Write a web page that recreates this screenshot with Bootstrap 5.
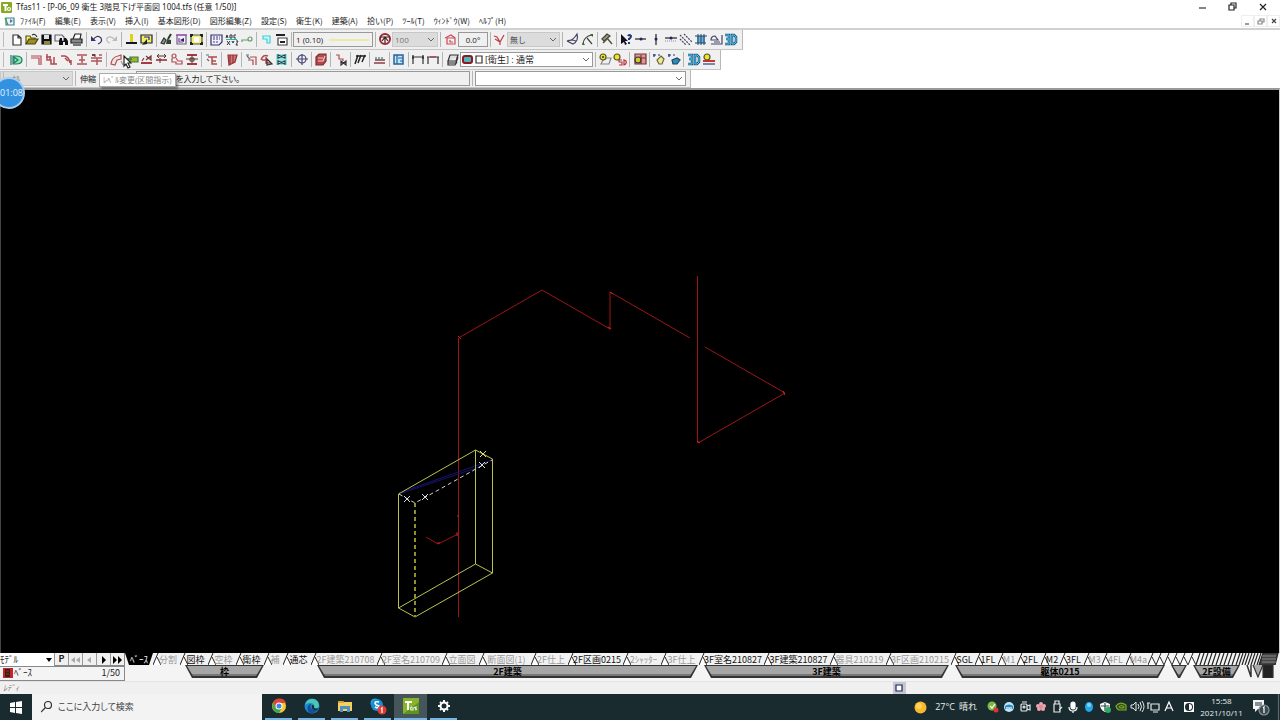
<!DOCTYPE html>
<html lang="ja">
<head>
<meta charset="utf-8">
<meta name="viewport" content="width=device-width, initial-scale=1">
<title>Tfas11</title>
<link rel="stylesheet" href="https://cdn.jsdelivr.net/npm/bootstrap@5.3.0/dist/css/bootstrap.min.css">
<style>
body{font-family:"Open Sans","Noto Sans CJK JP",sans-serif;font-size:9px;line-height:12px;color:#222;background:#fff}
button,input,select{font:inherit;color:inherit;border:0;background:none;padding:0;margin:0;border-radius:0;min-width:0}
svg{display:block;flex:none;fill:none;stroke-width:1.2}
.titlebar{height:14px;font:8px/14px "Noto Sans","Noto Sans CJK JP",sans-serif;font-feature-settings:"palt";padding-left:1px}
.winbtn{width:30px;height:14px}
.menubar{height:16px;border-bottom:2px solid #d0d0d0;font-family:"Noto Sans CJK JP",sans-serif;font-size:8px;color:#222}
.menubar .items{gap:9px;padding-left:4px}
.mdi button{width:13px;height:12px;border:1px solid #eee}
.dock{height:58px}
.tools{height:20px;background:#f0f0f0;border-bottom:1px solid #c4c4c4;border-right:1px solid #b8b8b8;padding-left:9px;position:relative;font-size:8px}
.tools.low{height:18px}
.tools::before{content:"";position:absolute;left:3px;top:2px;bottom:2px;width:1px;background:#bbb}
.tools button{width:15px;height:15px}
.sep,.sep4{width:5px;height:15px;flex:none;background:linear-gradient(90deg,transparent 2px,#b4b4b4 2px,#b4b4b4 3px,transparent 3px)}
.sep4{width:4px}
.combo{appearance:none;height:15px;border:1px solid #999;padding:0 4px;line-height:12px;background:#fff url("data:image/svg+xml,%3Csvg xmlns='http://www.w3.org/2000/svg' width='10' height='6'%3E%3Cpath d='M2 1l3 3 3-3' fill='none' stroke='%23666'/%3E%3C/svg%3E") no-repeat right 1px center}
.gray{background-color:#dcdcdc;border-color:#c8c8c8;color:#777;padding-left:2px}
.field{height:15px;border:1px solid #999;background:#f0f0f0}
.tools .penbox{width:80px;padding-left:2px}
.w-scale{width:46px}.w-ang{width:30px}.w-none{width:53px;color:#444}.w-layer{width:133px;padding-left:24px;font-size:9px}.w-mode{width:73px;padding-left:11px;opacity:1}
.msglabel{padding:0 40px 0 2px}
.message{width:334px;padding-left:31px}
.palt{font-family:"Noto Sans CJK JP",sans-serif;font-feature-settings:"palt"}
.w-entry{width:211px}
.stage{background:#000;border-top:2px solid #999;border-left:1px solid #444;border-right:1px solid #ccc;min-height:0}
.tip{left:99px;top:73px;height:14px;padding:0 3px;background:#fff;border:1px solid #aaa;box-shadow:2px 2px 2px #0006;color:#888;white-space:nowrap;line-height:12px;font-size:8px;z-index:3}
.timer{left:-7px;top:77px;width:32px;height:32px;border-radius:50%;background:#3391e2;border:2px solid #a9cdea;color:#e8f4ff;z-index:4;font:9px/28px "Open Sans",sans-serif;text-align:center;padding-left:5px}
.cursor{left:123px;top:55px;z-index:5}
.sheets{background:#f4f4f4;height:28px;font-family:"Noto Sans CJK JP",sans-serif}
.ctrl{width:125px;border-right:1px solid #888;border-bottom:1px solid #888;background:#f4f4f4}
.ctrl .top{height:14px;border-bottom:1px solid #888}
.ctrl .top button{width:14px;height:13px;border-left:1px solid #999;border-bottom:1px solid #888;background:#f0f0f0;font-weight:700}
.w-model{width:54px;height:13px;border:0;padding:0;background-image:url("data:image/svg+xml,%3Csvg xmlns='http://www.w3.org/2000/svg' width='8' height='6'%3E%3Cpath d='M1 1h6l-3 4z'/%3E%3C/svg%3E")}
.tabs{display:grid;height:12px;grid-template-columns:28px 27px 28px 28px 28px 19px 28px 66px 65px 37px 52px 37px 55px 38px 38px 65px 66px 56px 65px 24px 23px 19px 24px 19px 24px 18px 24px 22px repeat(6,8px) 1fr}
.sheet{overflow:hidden;white-space:nowrap;line-height:11px;height:12px;color:#111;padding-left:3px;text-align:center;background:#f2f2f2 url("data:image/svg+xml,%3Csvg xmlns='http://www.w3.org/2000/svg' width='8' height='12'%3E%3Cpath d='M4 1L0 12h8z' fill='%23fff'/%3E%3Cpath d='M5 0L0 12M4 4l4 8' fill='none' stroke='%23222'/%3E%3C/svg%3E") no-repeat}
.sheet.off{color:#999}
.sheet.on{background:#000;color:#fff;padding:0;clip-path:polygon(0 0,100% 0,calc(100% - 4px) 100%,4px 100%)}
.groups{display:grid;height:14px;grid-template-columns:79px 381px 245px 210px 16px 47px 1fr;column-gap:6px;padding-left:60px}
.grp{position:relative;height:13px;background:#333;clip-path:polygon(0 0,100% 0,calc(100% - 7px) 100%,7px 100%);font-weight:700;color:#000;z-index:0;line-height:12px;white-space:nowrap}
.grp::before{content:"";position:absolute;z-index:-1;inset:1px 2px 2px 2px;background:linear-gradient(#a6a6a6 8px,#777 8px);clip-path:polygon(0 0,100% 0,calc(100% - 6px) 100%,6px 100%)}
.shifted{margin-left:47px;margin-right:-47px}
.status{height:13px;background:#f0f0f0;color:#777;padding-left:3px;border-top:1px solid #e4e4e4;font:8px/12px "Noto Sans CJK JP",sans-serif}
.status svg{margin-right:374px}
.taskbar{height:26px;background:#1a2b2f;color:#e8eeee}
.start{width:32px;height:26px}
.search{width:230px;height:26px;background:#f3f3f3;color:#444;padding:0 9px;gap:6px}
.search input{font-size:9px;width:150px;outline:0}
.search input::placeholder{color:#444;opacity:1}
.app{width:33px;height:26px;padding:0 3px}
.app span{height:24px}
.app::after{content:"";display:block;height:2px;background:#76b5e6}
.app.active{background:#45555a;padding:0}
.tray button{width:16px;height:26px}
.clock{font-size:8px;line-height:12px;width:55px;text-align:center;padding-right:6px}
</style>
</head>
<body>
<div class="vh-100 d-flex flex-column overflow-hidden position-relative">

<header class="titlebar d-flex align-items-center">
  <svg width="11" height="11"><rect width="11" height="11" rx="1" fill="#8aa823"/><path d="M2 3h5M4.500 3v6" stroke="#fff" stroke-width="2"/><circle cx="8" cy="7" r="1.500" stroke="#fff"/></svg>
  <span class="ms-1">Tfas11 - [P-06_09 衛生 3階見下げ平面図 1004.tfs (任意 1/50)]</span>
  <div class="ms-auto d-flex">
    <button class="winbtn" aria-label="最小化"><svg width="30" height="14"><path d="M9 8h7" stroke="#333"/></svg></button>
    <button class="winbtn" aria-label="元に戻す"><svg width="30" height="14"><path d="M9 5h5v5H9zM11 5V3h5v5h-2" stroke="#222"/></svg></button>
    <button class="winbtn" aria-label="閉じる"><svg width="30" height="14"><path d="M10 4l6 6M16 4l-6 6" stroke="#222"/></svg></button>
  </div>
</header>

<nav class="menubar d-flex align-items-center">
  <svg width="12" height="11" class="ms-1"><path d="M2 2h8v7H2z" fill="#eef" stroke="#388"/><path d="M1 2l3 7" stroke="#494"/><path d="M6 3l3 2-3 2z" fill="#57a"/></svg>
  <div class="items d-flex">
    <button>ﾌｧｲﾙ(F)</button><button>編集(E)</button><button>表示(V)</button><button>挿入(I)</button><button>基本図形(D)</button><button>図形編集(Z)</button><button>設定(S)</button><button>衛生(K)</button><button>建築(A)</button><button>拾い(P)</button><button>ﾂｰﾙ(T)</button><button>ｳｨﾝﾄﾞｳ(W)</button><button>ﾍﾙﾌﾟ(H)</button>
  </div>
  <div class="mdi d-flex ms-auto">
    <button aria-label="最小化"><svg width="11" height="10"><path d="M3 8h4" stroke="#555"/></svg></button>
    <button aria-label="元に戻す"><svg width="11" height="10"><path d="M3 5h4v3H3zM5 5V3h4v3H7" stroke="#888"/></svg></button>
    <button aria-label="閉じる"><svg width="11" height="10"><path d="M4 3l4 4M8 3L4 7" stroke="#444"/></svg></button>
  </div>
</nav>

<main class="dock d-flex flex-column align-items-start">
<div class="tools d-flex align-items-center">
  <button aria-label="新規"><svg width="15" height="15"><path d="M4 3h5l3 3v7H4zM9 3v3h3" stroke="#333" fill="#fff"/></svg></button>
  <button aria-label="開く"><svg width="15" height="15"><path d="M2 12V4h4l1 2h4v2" fill="#f7ed60" stroke="#552"/><path d="M2 12l3-5h9l-3 5z" fill="#a08c20" stroke="#441"/><path d="M8 3q3-2 5 2" stroke="#333"/></svg></button>
  <button aria-label="保存"><svg width="15" height="15"><path d="M3 3h9v9H3z" fill="#111" stroke="#111"/><path d="M5 3h5v4H5z" fill="#dde"/><path d="M5 9h6v3H5z" fill="#8a8c33"/></svg></button>
  <button aria-label="検索"><svg width="15" height="15"><path d="M1 3h7l2 2v4H1z" fill="#eee" stroke="#667"/><path d="M5 13V9l1-3h2v3h2V6h2l2 3v4h-3v-3H9v3z" fill="#111"/></svg></button>
  <button aria-label="印刷"><svg width="15" height="15"><path d="M4 7l2-5h6l-1 5" fill="#fff" stroke="#222"/><path d="M2 7h11v4H2z" fill="#888" stroke="#222"/><path d="M4 13h8" stroke="#222"/></svg></button>
  <i class="sep"></i>
  <button aria-label="元に戻す"><svg width="15" height="15"><path d="M4 8q4-6 8-2 2 4-3 6" stroke="#336"/><path d="M2 4v5h5z" fill="#336"/></svg></button>
  <button aria-label="やり直し"><svg width="15" height="15"><path d="M11 8Q7 3 3 6q-1 4 3 5" stroke="#bbb"/><path d="M13 4v5H8z" fill="#bbb"/></svg></button>
  <i class="sep"></i>
  <button aria-label="レイヤ"><svg width="15" height="15"><path d="M2 10h11v2H2z" fill="#113"/><path d="M6 2h3v8H6z" fill="#ddd41a"/></svg></button>
  <button aria-label="属性"><svg width="15" height="15"><path d="M2 3h11v8H2z" stroke="#223" fill="#f3ed60"/><path d="M5 5h5v3" stroke="#22a"/><path d="M3 13l5-6v5z" fill="#123"/></svg></button>
  <i class="sep"></i>
  <button aria-label="筆"><svg width="15" height="15"><path d="M12 2L9 7" stroke="#333" stroke-width="2"/><path d="M8 7l4 1v4H7z" fill="#343"/><path d="M2 11l3-5 2 2-2 4z" fill="#899" stroke="#333"/></svg></button>
  <button aria-label="範囲"><svg width="15" height="15"><path d="M3 3h9v9H3z" stroke="#667"/><path d="M2 3h11M5 6v4h4" stroke="#93b"/><path d="M10 6L6 8l4 2z" fill="#226"/></svg></button>
  <button aria-label="全体"><svg width="15" height="15"><path d="M2 3h11v9H2z" fill="#f5ef79" stroke="#555"/><path d="M5 5h5v5H5z" fill="#fff"/><path d="M2 5V3h2m7 0h2v2m0 5v2h-2M4 12H2v-2" stroke="#222" stroke-width="2"/></svg></button>
  <i class="sep"></i>
  <button aria-label="文字"><svg width="15" height="15"><path d="M2 3h11v7l-3 3H2z" fill="#eef" stroke="#336"/><path d="M4 5h7M4 7h7M4 10h5" stroke="#447" stroke-dasharray="2 1"/></svg></button>
  <button aria-label="文字変更"><svg width="15" height="15"><path d="M2 6l1-3 1 3m2-3h2v3H6zm6 0h-2v3h2M3 9l3 4m0-4l-3 4m5-4l1 2 1-2m2 0h2l-2 4h2" stroke="#334" stroke-width="1"/><path d="M2 7.500h11" stroke="#2b9" stroke-width="1"/></svg></button>
  <button aria-label="鍵"><svg width="15" height="15"><circle cx="11" cy="7" r="2" stroke="#699b70"/><path d="M9 8H3v2" stroke="#699b70"/></svg></button>
  <i class="sep"></i>
  <button aria-label="形状"><svg width="15" height="15"><path d="M4 4h7v7H8V7H4z" fill="#cff" stroke="#42cbd0"/></svg></button>
  <button aria-label="一覧"><svg width="15" height="15"><path d="M4 6h9v7H4z" stroke="#444" fill="#fff"/><path d="M2 3h9" stroke="#222" stroke-width="2"/><path d="M6 10h5" stroke="#222" stroke-width="2"/></svg></button>
  <i class="sep4"></i>
  <button class="field penbox d-flex align-items-center" aria-label="線種">1 (0.10) <svg class="ms-1" width="42" height="8"><path d="M2 4h40" stroke="#e6e65a"/></svg></button>
  <i class="sep4"></i>
  <button aria-label="縮尺"><svg width="15" height="15"><circle cx="8" cy="7" r="5" stroke="#a12a32" stroke-width="2"/><path d="M3 5h10M5 9l3-4 3 4M8 5v6" stroke="#422"/></svg></button>
  <select class="combo gray w-scale" disabled aria-label="縮尺値"><option>100</option></select>
  <i class="sep"></i>
  <button aria-label="角度"><svg width="15" height="15"><path d="M4 6h8v6H4z" stroke="#cc4a55"/><path d="M2 6l6-3 4 3M7 8v2h3" stroke="#cc4a55"/></svg></button>
  <input class="field w-ang text-center" value="0.0°" aria-label="角度値">
  <i class="sep4"></i>
  <button aria-label="スナップ"><svg width="15" height="15"><path d="M2 4l3 1 3 5 4-7M3 7l5 3v3" stroke="#bd3b44"/></svg></button>
  <select class="combo gray w-none" aria-label="種別"><option>無し</option></select>
  <i class="sep"></i>
  <button aria-label="曲面"><svg width="15" height="15"><path d="M12 2q2 7-4 10L2 9q6 0 10-7zM2 9q4-2 9 0" stroke="#446"/></svg></button>
  <button aria-label="接線"><svg width="15" height="15"><path d="M3 12Q4 4 12 3M7 6l5 6" stroke="#444"/><path d="M2 13h3l-2-3zM10 2h3v3z" fill="#363"/></svg></button>
  <i class="sep4"></i>
  <button aria-label="ハンマー"><svg width="15" height="15"><path d="M3 7l5-5 3 2-6 5z" fill="#998" stroke="#443"/><path d="M8 6l5 6M4 11l4-4" stroke="#554" stroke-width="1.500"/></svg></button>
  <i class="sep4"></i>
  <button aria-label="ヘルプ"><svg width="15" height="15"><path d="M3 2v10l3-2 1 3 2-1-2-3h3z" fill="#112"/><path d="M10 4q1-2 3 0 0 2-2 3v1m0 2v2" stroke="#237" stroke-width="2"/></svg></button>
  <button aria-label="水平"><svg width="15" height="15"><path d="M2 7h11" stroke="#222"/><circle cx="8" cy="7" r="1.500" fill="#226"/></svg></button>
  <button aria-label="垂直"><svg width="15" height="15"><path d="M8 2v11" stroke="#222"/><circle cx="8" cy="7" r="1.500" fill="#226"/></svg></button>
  <button aria-label="中間"><svg width="15" height="15"><path d="M2 6h12" stroke="#222"/><circle cx="8" cy="6" r="1.500" fill="#226"/><path d="M2 9h12" stroke="#88a" stroke-dasharray="1 1"/></svg></button>
  <button aria-label="平行"><svg width="15" height="15"><path d="M2 3l10 10M6 2l8 8M2 7l6 6" stroke="#446" stroke-dasharray="2 1"/></svg></button>
  <button aria-label="格子"><svg width="15" height="15"><path d="M4 4h8v7H4z" fill="#6bb0d8"/><path d="M5 2v11M8 2v11M11 2v11M2 4h12M2 11h11" stroke="#246" stroke-width="1"/></svg></button>
  <button aria-label="図形"><svg width="15" height="15"><path d="M3 12h11V3M3 8q0-4 4-4l3 4zM6 10h6" stroke="#446"/></svg></button>
  <button class="me-1" aria-label="3D"><svg width="15" height="15"><path d="M2 3h4v9H2M3 7h3M9 3h2l2 2v5l-2 2H9z" stroke="#165a86" stroke-width="2.500"/><path d="M2 3h4v9H2M3 7h3M9 3h2l2 2v5l-2 2H9z" stroke="#5bc4e8" stroke-width="1"/></svg></button>
</div>

<div class="tools d-flex align-items-center">
  <button aria-label="配管"><svg width="15" height="15"><path d="M4 4h3q6 0 6 4t-6 4H4z" fill="#8ee9b0" stroke="#276"/><path d="M2 3v10M5 5l4 3-4 3z" stroke="#276"/></svg></button>
  <i class="sep"></i>
  <button aria-label="エルボ"><svg width="15" height="15"><path d="M2 4h10v9M2 6h8v7" stroke="#b14a50"/></svg></button>
  <button aria-label="分岐"><svg width="15" height="15"><path d="M3 2v6h4v4h6M6 4v4m4-3v7M2 5h5" stroke="#b14a50" stroke-width="1.500"/></svg></button>
  <button aria-label="曲げ"><svg width="15" height="15"><path d="M2 4h4q4 1 5 7m1-3v5M6 6l3 3" stroke="#b14a50" stroke-width="1.500"/></svg></button>
  <button aria-label="上下"><svg width="15" height="15"><path d="M3 3h10M3 12h10M5 8h6M8 4v7" stroke="#b1545a" stroke-width="1.500"/></svg></button>
  <button aria-label="間隔"><svg width="15" height="15"><path d="M2 6h11M2 9h11M3 3h3v2m4-2h3M8 6v7" stroke="#b1545a" stroke-width="1.500"/><path d="M3 3h3" stroke="#222"/></svg></button>
  <i class="sep"></i>
  <button aria-label="レベル変更"><svg width="15" height="15"><path d="M2 12q1-7 7-8l3-1v4L8 8l-2 5z" fill="#f6e4e4" stroke="#a55"/><path d="M12 9l2 4" stroke="#999"/></svg></button>
  <button aria-label="区間"><svg width="15" height="15"><path d="M6 5h8v5H6z" fill="#9ab91c" stroke="#475"/><path d="M2 7h6" stroke="#484" stroke-width="2"/></svg></button>
  <button aria-label="接続"><svg width="15" height="15"><path d="M2 11h11" stroke="#a63c42" stroke-width="2"/><path d="M7 4l5 4V4L7 8M5 6L3 9" stroke="#733"/></svg></button>
  <button aria-label="切断"><svg width="15" height="15"><path d="M2 8h11" stroke="#b1545a" stroke-width="2"/><path d="M3 4h9M5 2L3 4l2 2m5-4l2 2-2 2M6 6v5" stroke="#533" stroke-width="1"/></svg></button>
  <button aria-label="移動"><svg width="15" height="15"><circle cx="5" cy="4" r="2" stroke="#b14a50"/><path d="M3 6v4h4v2h6v-3H9L7 6" stroke="#b14a50"/></svg></button>
  <button aria-label="伸縮"><svg width="15" height="15"><path d="M3 3h10M3 12h10" stroke="#a63c42" stroke-width="2"/><path d="M2 7h12M8 3v8M6 6h4v3H6z" stroke="#533" stroke-width="1"/></svg></button>
  <i class="sep"></i>
  <button aria-label="変換"><svg width="15" height="15"><path d="M4 5h9M8 5v7h5M8 9h4" stroke="#b14a50" stroke-width="1.500"/><path d="M2 3h3M3 7l2 2" stroke="#477"/></svg></button>
  <i class="sep"></i>
  <button aria-label="断面"><svg width="15" height="15"><path d="M4 3h9l-2 7-6 3z" fill="#c9797c" stroke="#933"/><path d="M6 3v9M9 3v8" stroke="#933"/></svg></button>
  <i class="sep"></i>
  <button aria-label="配管変更"><svg width="15" height="15"><path d="M6 5h6v8M4 8h5v5" stroke="#b14a50"/><path d="M2 3h3M3 4l3 3" stroke="#477"/></svg></button>
  <button aria-label="回転"><svg width="15" height="15"><path d="M2 8q2-6 7-4M3 8h5M7 5v6h5" stroke="#b14a50" stroke-width="1.500"/><path d="M8 7v6l5-1z" stroke="#333"/></svg></button>
  <button aria-label="バルブ"><svg width="15" height="15"><path d="M2 2h11v11H2z" fill="#91e3e5"/><path d="M4 3v3l7-3v3zM4 9v3l7-3v3z" stroke="#244" fill="#fff"/></svg></button>
  <i class="sep"></i>
  <button aria-label="中心"><svg width="15" height="15"><circle cx="8" cy="7" r="4" stroke="#447"/><path d="M8 2v11M2 7h12" stroke="#447"/></svg></button>
  <i class="sep4"></i>
  <button aria-label="立体"><svg width="15" height="15"><path d="M3 5l3-3h7v7l-3 4H3z" fill="#b8454b" stroke="#733"/><path d="M5 6h5M5 9h5l2-5" stroke="#ecc"/></svg></button>
  <i class="sep"></i>
  <button aria-label="弁"><svg width="15" height="15"><path d="M3 3h3v4h4v2" stroke="#b14a50"/><path d="M8 9v4l5-4v4z" stroke="#333"/></svg></button>
  <i class="sep4"></i>
  <button aria-label="斜線"><svg width="15" height="15"><path d="M4 4h10M6 3L3 12M9 3L6 11m7-8l-3 7" stroke="#222" stroke-width="1.500"/></svg></button>
  <i class="sep"></i>
  <button aria-label="床"><svg width="15" height="15"><path d="M2 11h11M3 8h10" stroke="#8c4045" stroke-width="1.500"/><path d="M4 5v3m3-3v3m3-3v3" stroke="#477"/></svg></button>
  <i class="sep4"></i>
  <button aria-label="表"><svg width="15" height="15"><path d="M3 3h9v9H3z" fill="#bfe5fa" stroke="#27639c" stroke-width="1.500"/><path d="M6 3v9M7 6h5M9 9h3" stroke="#27639c"/></svg></button>
  <i class="sep4"></i>
  <button aria-label="寸法"><svg width="15" height="15"><path d="M2 5h12M3 5v7M13 5v7" stroke="#333"/><path d="M3 3v4m10-4v4" stroke="#222"/></svg></button>
  <button aria-label="寸法2"><svg width="15" height="15"><path d="M2 5h12M3 5v7M13 5v7" stroke="#333"/><path d="M5 5h6" stroke="#b34"/></svg></button>
  <i class="sep"></i>
  <button aria-label="レイヤ"><svg width="15" height="15"><path d="M5 3h8l-2 6H3zM3 9v2h8l2-6M3 11v2h7l2-3" fill="#ddd" stroke="#333"/></svg></button>
  <span class="position-relative d-flex">
    <select class="combo w-layer" aria-label="レイヤグループ"><option>[衛生] : 通常</option></select>
    <svg class="position-absolute start-0 top-0" width="24" height="15"><rect x="3" y="4" width="9" height="7" rx="2" fill="#4bb7bc" stroke="#8d1820" stroke-width="2"/><path d="M16 4h6v7h-6z" stroke="#333"/></svg>
  </span>
  <i class="sep4"></i>
  <button aria-label="確認"><svg width="15" height="15"><path d="M4 12l3-6h7l-2 6z" stroke="#888"/><circle cx="6" cy="5" r="3" fill="#f0e423" stroke="#553"/><circle cx="6" cy="5" r="1" fill="#333"/></svg></button>
  <button aria-label="確認SD"><svg width="15" height="15"><circle cx="5" cy="5" r="3" fill="#f0e423" stroke="#553"/><path d="M10 8H7v2h3v3H7m5-5v5q3-1 2-4z" stroke="#bb343d"/></svg></button>
  <i class="sep"></i>
  <button aria-label="照合"><svg width="15" height="15"><path d="M3 2h11v10H3z" fill="#d99" stroke="#733"/><circle cx="6" cy="8" r="3" fill="#c8cf35" stroke="#333"/><path d="M9 3v9M9 6h5" stroke="#733"/></svg></button>
  <i class="sep4"></i>
  <button aria-label="表示"><svg width="15" height="15"><path d="M2 3h3m2 0h2M3 2v3" stroke="#238"/><path d="M10 4l3 3-2 5H8L6 8z" fill="#f0eb86" stroke="#664"/></svg></button>
  <button aria-label="着色"><svg width="15" height="15"><path d="M2 3h3m2 0h2M3 2v3" stroke="#238"/><path d="M6 8l5-2 3 2-3 4H7z" fill="#2791bb" stroke="#246"/></svg></button>
  <i class="sep"></i>
  <button aria-label="3D表示"><svg width="15" height="15"><path d="M2 3h4v9H2M3 7h3M9 3h2l2 2v5l-2 2H9z" stroke="#165a86" stroke-width="2.500"/><path d="M2 3h4v9H2M3 7h3M9 3h2l2 2v5l-2 2H9z" stroke="#5bc4e8" stroke-width="1"/></svg></button>
  <button class="me-1" aria-label="集計"><svg width="15" height="15"><path d="M2 9h12" stroke="#c33" stroke-width="2"/><path d="M2 12h12" stroke="#78a" stroke-width="2"/><circle cx="6" cy="5" r="3" fill="#f0e423" stroke="#553"/></svg></button>
</div>

<div class="tools low d-flex align-items-center ps-0">
  <select class="combo gray w-mode" disabled aria-label="モード"><option>ﾅﾙ</option></select>
  <i class="sep"></i>
  <label for="msg" class="msglabel">伸縮</label>
  <input id="msg" class="field message palt" value="点を入力して下さい。" readonly>
  <i class="sep"></i>
  <select class="combo w-entry me-1" aria-label="入力値"><option></option></select>
</div>
</main>

<section class="stage flex-grow-1">
  <svg class="w-100 h-100" viewBox="1 90 1278 563" preserveAspectRatio="xMidYMid meet" role="img" aria-label="配管アイソメ図">
    <g stroke="#9e1515" stroke-width="1">
      <path d="M458.500 617V338L542 290l68 39v-37l80 46M705 347l80 46-87 50M697.500 276v167M426 537l12 7 20-10"/>
      <path d="M458 336l3 3M608 327l3 2M610 292l3 2M697 441l3 2M783 391l2 4M437 543h3M457 516h2M457 532v4" stroke="#cf2525"/>
    </g>
    <g stroke="#15156e" stroke-width="1"><path d="M399 493L492 460M402 493L482 466"/></g>
    <g stroke="#bcc24e" stroke-width="1">
      <path d="M398.500 494L475.500 450l17 9v114L415 617l-16.500-9zM475.500 450v114l17 9M475.500 564L398.500 608"/>
      <path d="M415 503v114" stroke="#8f922c" stroke-width="2" stroke-dasharray="4 3"/>
    </g>
    <path d="M399 494l16 9 77-43" stroke="#d0d0df" stroke-width="1" stroke-dasharray="4 3"/>
    <path d="M404 496l6 6m0-6l-6 6M422 494l6 6m0-6l-6 6M479 462l6 6m0-6l-6 6" stroke="#ddd" stroke-width="1"/>
    <path d="M480 451l6 6m0-6l-6 6" stroke="#e0e07a" stroke-width="1"/>
  </svg>
</section>

<section class="sheets d-flex">
  <div class="ctrl flex-shrink-0">
    <div class="top d-flex">
      <select class="combo w-model" aria-label="モデル"><option>ﾓﾃﾞﾙ</option></select>
      <button>P</button>
      <button aria-label="先頭"><svg width="13" height="11"><path d="M6 3v6L2 6zM11 3v6L7 6z" fill="#aaa"/></svg></button>
      <button aria-label="前へ"><svg width="13" height="11"><path d="M8 3v6L4 6z" fill="#aaa"/></svg></button>
      <button aria-label="次へ"><svg width="13" height="11"><path d="M5 2v8l4-4z" fill="#000"/></svg></button>
      <button aria-label="最後"><svg width="13" height="11"><path d="M2 2v8l4-4zM7 2v8l4-4z" fill="#000"/></svg></button>
    </div>
    <div class="d-flex align-items-center">
      <svg width="14" height="12"><path d="M3 1h10v10H3z" fill="#c42530"/><path d="M5 2h5v8H5z" fill="#321"/><path d="M6 4h3M6 7h3" stroke="#b22"/></svg>
      <span>ﾍﾞｰｽ</span><span class="ms-auto me-1">1/50</span>
    </div>
  </div>
  <div class="flex-grow-1 overflow-hidden">
    <div class="tabs">
      <button class="sheet on">ﾍﾞｰｽ</button><button class="sheet off">分割</button><button class="sheet">図枠</button><button class="sheet off">空枠</button><button class="sheet">衛枠</button><button class="sheet off">補</button><button class="sheet">通芯</button><button class="sheet off">2F建築210708</button><button class="sheet off">2F室名210709</button><button class="sheet off">立面図</button><button class="sheet off">断面図(1)</button><button class="sheet off">2F仕上</button><button class="sheet">2F区画0215</button><button class="sheet off">2ｼｬｯﾀｰ</button><button class="sheet off">3F仕上</button><button class="sheet">3F室名210827</button><button class="sheet">3F建築210827</button><button class="sheet off">器具210219</button><button class="sheet off">3F区画210215</button><button class="sheet">SGL</button><button class="sheet">1FL</button><button class="sheet off">M1</button><button class="sheet">2FL</button><button class="sheet">M2</button><button class="sheet">3FL</button><button class="sheet off">M3</button><button class="sheet off">4FL</button><button class="sheet off">M4a</button>
      <button class="sheet" aria-label="シート29"></button><button class="sheet" aria-label="シート30"></button><button class="sheet" aria-label="シート31"></button><button class="sheet" aria-label="シート32"></button><button class="sheet" aria-label="シート33"></button><button class="sheet" aria-label="シート34"></button>
      <svg width="84" height="12" stroke="#222"><path d="M4 0L0 12M8 0L4 12M12 0L8 12M16 0l-4 12M20 0l-4 12M24 0l-4 12M28 0l-4 12M32 0l-4 12M36 0l-4 12M40 0l-4 12M44 0l-4 12M47 0l-4 12M50 0l-4 12M53 0l-4 12M56 0l-4 12M59 0l-4 12M62 0l-4 12M65 0l-4 12"/><path d="M67 0h15l-3 12H63z" fill="#444"/><path d="M66 3h14M66 6h14M66 9h14" stroke="#888"/></svg>
    </div>
    <div class="groups">
      <button class="grp">枠</button><button class="grp shifted">2F建築</button><button class="grp shifted">3F建築</button><button class="grp shifted">躯体0215</button><button class="grp shifted" aria-label="グループ5"></button><button class="grp shifted">2F設備</button>
      <svg class="shifted" width="34" height="13" stroke="#333"><path d="M1 0l4 12V0" stroke-width="1.500"/><path d="M7 0l5 12L17 0" fill="#aaa"/><path d="M17 0h10v13H17z" fill="#222"/></svg>
    </div>
  </div>
</section>

<footer>
<div class="status d-flex align-items-center"><em class="text-nowrap">ﾚﾃﾞｨ</em>
  <svg class="ms-auto" width="13" height="12"><path d="M0 0h13v12H0z" fill="#c4c7cf"/><path d="M3 3h6v6H3z" fill="#fff" stroke="#1b2261"/></svg>
</div>
<div class="taskbar d-flex align-items-center">
  <button class="start" aria-label="スタート"><svg width="32" height="26"><path d="M10 9l5-1v5h-5zM16 8l6-1v6h-6zM10 14h5v5l-5-1zM16 14h6v6l-6-1z" fill="#fff"/></svg></button>
  <label class="search d-flex align-items-center"><svg width="11" height="12" stroke="#333"><circle cx="7" cy="4" r="3.500"/><path d="M4 7l-4 4"/></svg><input class="palt" placeholder="ここに入力して検索" aria-label="検索"></label>
  <button class="app" aria-label="Chrome"><span class="d-flex align-items-center justify-content-center"><svg width="16" height="16"><circle cx="8" cy="8" r="7" fill="#f8c92c"/><path d="M2 5A7 7 0 0 1 15 5H8L5 10z" fill="#df4335"/><path d="M2 5A7 7 0 0 0 8 15l3-5H5z" fill="#37a852"/><circle cx="8" cy="8" r="3.500" fill="#fff"/><circle cx="8" cy="8" r="2.500" fill="#4285e8"/></svg></span></button>
  <button class="app" aria-label="Edge"><span class="d-flex align-items-center justify-content-center"><svg width="16" height="16"><circle cx="8" cy="8" r="7.500" fill="#1c87d4"/><path d="M1 7Q3 0 9 1q6 1 6 7-1 3-5 2 1-5-4-5-3 0-5 2z" fill="#4ac7b4"/><path d="M7 6q-2 5 3 6 3 0 4-1-3 5-8 4-4-3-2-7 1-2 3-2z" fill="#125099"/><path d="M8 7q3 0 2 3 3 1 5 0-2 3-5 2-3-1-2-5z" fill="#1a2b2f"/></svg></span></button>
  <button class="app" aria-label="エクスプローラー"><span class="d-flex align-items-center justify-content-center"><svg width="16" height="16"><path d="M1 3h5l1 1h8v9H1z" fill="#f6cf5c"/><path d="M1 3h5l1 2H1z" fill="#dda52e"/><path d="M3 8h10v6H10v-3H6v3H3z" fill="#4b93c5"/></svg></span></button>
  <button class="app" aria-label="Skype"><span class="d-flex align-items-center justify-content-center"><svg width="18" height="18"><circle cx="6" cy="6" r="4.500" fill="#2aa8e8"/><circle cx="8" cy="8" r="6" fill="#188fd4"/><path d="M10 5Q6 4 6 6t4 3q0 3-4 1" stroke="#fff" stroke-width="1.500"/><circle cx="13" cy="13" r="4.500" fill="#df3b35"/><path d="M12 12l1-1v5" stroke="#fff"/></svg></span></button>
  <button class="app active" aria-label="Tfas"><span class="d-flex align-items-center justify-content-center"><svg width="16" height="16"><rect width="16" height="16" fill="#86b52c"/><path d="M0 16L16 4v12z" fill="#5e9418"/><path d="M2 4h7M5 4v8" stroke="#fff" stroke-width="2"/><path d="M9 9q-2 0-1 3h2V9m4 0q-3 0-2 1 3 2 0 2" stroke="#eef"/></svg></span></button>
  <button class="app" aria-label="設定"><span class="d-flex align-items-center justify-content-center"><svg width="14" height="14"><circle cx="7" cy="7" r="3.500" stroke="#fff" stroke-width="2"/><path d="M7 1v2m0 8v2M1 7h2m8 0h2M3 3l1 1m6 6l1 1m0-8l-1 1m-6 6l-1 1" stroke="#fff" stroke-width="2"/></svg></span></button>
  <div class="ms-auto d-flex align-items-center">
    <svg width="13" height="13" class="me-2"><circle cx="6.500" cy="6.500" r="6" fill="#f8b72c"/><circle cx="5" cy="5" r="3" fill="#ffd25a"/></svg>
    <span>27°C</span><span class="ms-1 me-2">晴れ</span>
    <div class="tray d-flex">
      <button aria-label="更新"><svg width="16" height="26"><circle cx="7" cy="12" r="4.500" fill="#7cbb42"/><path d="M5 12l2 2 3-4" stroke="#fff"/><circle cx="11" cy="16" r="2.500" fill="#d33"/></svg></button>
      <button aria-label="クラウド"><svg width="16" height="26"><circle cx="8" cy="13" r="5" fill="#bde6f7"/><path d="M4 12q4-3 8 0v3H4z" fill="#258ac5"/><path d="M5 14h6" stroke="#fff"/></svg></button>
      <button aria-label="カメラ"><svg width="16" height="26" stroke="#e5eaea"><rect x="4" y="10" width="6" height="7" rx="1"/><path d="M10 12l3-1v5l-3-1M5 8h5"/><circle cx="7" cy="13" r="1"/></svg></button>
      <button aria-label="花"><svg width="16" height="26"><g fill="#f0a5ae"><circle cx="8" cy="10" r="2"/><circle cx="5" cy="12" r="2"/><circle cx="11" cy="12" r="2"/><circle cx="6" cy="15" r="2"/><circle cx="10" cy="15" r="2"/></g><circle cx="8" cy="13" r="1.500" fill="#e08b96"/></svg></button>
      <button aria-label="USB"><svg width="16" height="26" stroke="#e5eaea"><path d="M5 10h6v8H5zM6 10V7h4v3M10 16l3-3"/></svg></button>
      <button aria-label="マイク"><svg width="16" height="26" stroke="#fff"><rect x="6" y="8" width="4" height="7" rx="2" fill="#fff"/><path d="M4 13q0 4 4 4t4-4M8 17v2"/></svg></button>
      <button aria-label="同期"><svg width="16" height="26"><ellipse cx="8" cy="13" rx="4" ry="5" fill="#24a8ed"/><ellipse cx="8" cy="11" rx="2" ry="2" fill="#7ed4ff"/></svg></button>
      <button aria-label="セキュリティ"><svg width="16" height="26"><path d="M8 8l5 2q0 6-5 8-5-2-5-8z" fill="#fff"/><path d="M8 9v8M4 12h8" stroke="#344"/><circle cx="11" cy="16" r="3" fill="#2cab61"/></svg></button>
      <button aria-label="GPU"><svg width="16" height="26" stroke="#79a928"><path d="M3 12q4-5 10-1v5H7q-3 0-4-4z" fill="#354c20"/><path d="M6 13q3-3 5 0-2 2-5 0"/></svg></button>
      <button aria-label="音量"><svg width="16" height="26" stroke="#e5eaea"><path d="M2 11h2l3-3v9l-3-3H2zM9 10q2 3 0 5m2-7q3 5 0 9m2-10q4 6 0 11" stroke-width="1"/></svg></button>
      <button aria-label="ネットワーク"><svg width="16" height="26" stroke="#e5eaea"><path d="M6 10h8v6H6zM8 18h5M3 9v6M2 9h3"/></svg></button>
      <button aria-label="入力モード"><svg width="16" height="26" stroke="#fff"><path d="M4 17l4-9 4 9M5 14h6"/></svg></button>
      <button class="ms-1" aria-label="IME"><svg width="16" height="26"><path d="M3 8h10v10H3z" fill="#fff"/><circle cx="8" cy="13" r="4" fill="#1a2b2f"/><path d="M8 10q3 0 3 3t-3 3z" fill="#fff"/></svg></button>
    </div>
    <div class="clock">15:58<br>2021/10/11</div>
    <button aria-label="通知"><svg width="28" height="26"><path d="M1 6h11v9H6l-3 3v-3H1z" fill="#f2f5f5"/><path d="M3 9h7M3 11h7" stroke="#1a2b2f"/><circle cx="12" cy="16" r="5" fill="#39494d" stroke="#8a9698"/><path d="M11 14l1-1v6" stroke="#fff"/><path d="M26.500 0v26" stroke="#5a676a"/></svg></button>
  </div>
</div>
</footer>

<div class="tip position-absolute">ﾚﾍﾞﾙ変更(区間指示)</div>
<div class="timer position-absolute">01:08</div>
<svg class="cursor position-absolute" width="9" height="14"><path d="M1 1v10l2-2 2 4 2-1-2-4h3z" fill="#fff" stroke="#222"/></svg>
</div>
<script src="https://cdn.jsdelivr.net/npm/bootstrap@5.3.0/dist/js/bootstrap.bundle.min.js"></script>
</body>
</html>
